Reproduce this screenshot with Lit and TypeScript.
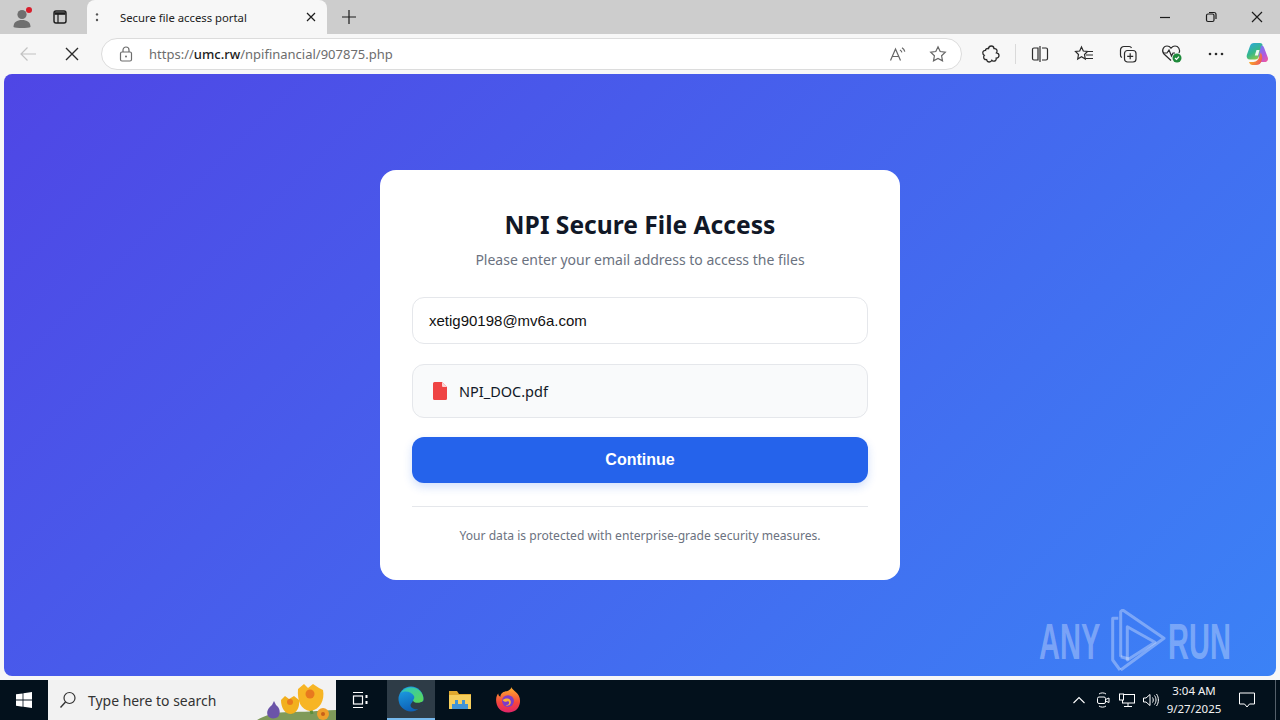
import { LitElement, html, css, svg } from 'lit';
import { customElement } from 'lit/decorators.js';

const icon = (w: number, h: number, body: unknown) => html`<svg width=${w} height=${h} viewBox="0 0 ${w} ${h}" fill="none" stroke="currentColor" stroke-width="1.2">${body}</svg>`;

@customElement('app-root')
export class AppRoot extends LitElement {
  static styles = css`
    :host {
      display: flex;
      flex-direction: column;
      width: 1280px;
      height: 720px;
      overflow: hidden;
      position: relative;
      background: #f7f7f7;
      font-family: 'Noto Sans', 'Open Sans', sans-serif;
    }
    svg { display: block; }
    .strip {
      height: 34px;
      background: #cdcdcd;
      display: flex;
      align-items: center;
      color: #1c1c1c;
      flex: none;
    }
    .strip-btn {
      display: flex;
      align-items: center;
      justify-content: center;
      width: 38px;
      height: 34px;
      flex: none;
    }
    .profile { width: 44px; }
    .tabs-btn { width: 32px; margin-right: 11px; }
    .tab {
      width: 240px;
      height: 34px;
      box-sizing: border-box;
      background: #f7f7f7;
      border-radius: 8px 8px 0 0;
      display: flex;
      align-items: center;
      padding: 0 10px 0 8px;
      font-size: 11.3px;
      flex: none;
    }
    .tab-title { margin-left: 21px; flex: 1; white-space: nowrap; color: #222; }
    .new-tab { width: 44px; }
    .spacer { flex: 1; }
    .win-btn {
      width: 46px;
      height: 34px;
      display: flex;
      align-items: center;
      justify-content: center;
      flex: none;
    }
    .toolbar {
      height: 40px;
      display: flex;
      align-items: center;
      padding-left: 6px;
      flex: none;
      color: #2b2b2b;
    }
    .tool {
      width: 44px;
      height: 40px;
      display: flex;
      align-items: center;
      justify-content: center;
      flex: none;
    }
    .copilot { width: 40px; }
    .back { color: #c2c2c2; }
    .address {
      width: 861px;
      height: 32px;
      box-sizing: border-box;
      margin: 0 7px;
      background: #fff;
      border: 1px solid #dcdcdc;
      border-radius: 16px;
      display: flex;
      align-items: center;
      padding: 0 3px 0 17px;
      font-size: 13px;
      color: #6d6d6d;
      flex: none;
    }
    .url { margin-left: 16px; flex: 1; white-space: nowrap; }
    .url b { font-weight: 500; color: #1b1b1b; }
    .addr-icon { width: 40px; display: flex; justify-content: center; color: #666; }
    .sep { width: 1px; height: 20px; background: #dadada; margin: 0 2px; flex: none; }

    .page {
      flex: 1;
      margin: 0 4px 4px;
      border-radius: 8px;
      background: linear-gradient(135deg, #4f46e5 0%, #3b82f6 100%);
      display: flex;
      align-items: center;
      justify-content: center;
      min-height: 0;
    }
    .card {
      width: 520px;
      height: 410px;
      box-sizing: border-box;
      background: #fff;
      border-radius: 16px;
      padding: 37px 32px 0;
      display: flex;
      flex-direction: column;
    }
    h1 {
      margin: 0;
      font-size: 24.6px;
      line-height: 36px;
      font-weight: 700;
      text-align: center;
      color: #111827;
    }
    .sub {
      margin: 7px 0 0;
      font-size: 14px;
      line-height: 20px;
      text-align: center;
      color: #6b7280;
    }
    .email {
      margin-top: 27px;
      height: 47px;
      box-sizing: border-box;
      border: 1px solid #e5e7eb;
      border-radius: 12px;
      padding: 0 16px;
      display: flex;
      align-items: center;
      font-family: 'Liberation Sans', Arial, sans-serif;
      font-size: 15px;
      color: #111;
    }
    .file {
      margin-top: 20px;
      height: 54px;
      box-sizing: border-box;
      border: 1px solid #e5e7eb;
      border-radius: 12px;
      background: #f9fafb;
      padding: 0 20px;
      display: flex;
      align-items: center;
      gap: 12px;
      font-size: 14.5px;
      color: #111827;
    }
    .continue {
      margin-top: 19px;
      height: 46px;
      border-radius: 12px;
      background: #2563eb;
      color: #fff;
      display: flex;
      align-items: center;
      justify-content: center;
      font-family: 'Liberation Sans', Arial, sans-serif;
      font-size: 16px;
      font-weight: 700;
      box-shadow: 0 4px 10px rgba(37, 99, 235, 0.2);
    }
    .divider { margin-top: 23px; height: 1px; background: #e5e7eb; }
    .note {
      margin-top: 20px;
      text-align: center;
      font-size: 12.1px;
      line-height: 17px;
      color: #6b7280;
    }

    .taskbar {
      height: 40px;
      background: #03111c;
      display: flex;
      align-items: stretch;
      flex: none;
      color: #fff;
    }
    .start {
      width: 48px;
      display: flex;
      align-items: center;
      justify-content: center;
      flex: none;
    }
    .search {
      width: 288px;
      background: #f2f2f2;
      display: flex;
      align-items: center;
      color: #333;
      font-size: 13.95px;
      flex: none;
      padding-left: 11px;
      box-sizing: border-box;
      overflow: hidden;
    }
    .search span { margin-left: 11px; white-space: nowrap; flex: 1; }
    .task {
      width: 48px;
      display: flex;
      align-items: center;
      justify-content: center;
      flex: none;
      box-sizing: border-box;
    }
    .task.view { width: 51px; padding-right: 3px; }
    .task.active { background: #2e3c47; border-bottom: 2px solid #76b9ed; }
    .task.files { margin-left: 1px; }
    .tray {
      width: 24px;
      display: flex;
      align-items: center;
      justify-content: center;
      flex: none;
    }
    .clock {
      width: 62px;
      display: flex;
      flex-direction: column;
      align-items: center;
      justify-content: center;
      font-size: 11.5px;
      line-height: 18px;
      color: #f2f2f2;
      white-space: nowrap;
    }
    .notify {
      width: 42px;
      margin-left: 1px;
      display: flex;
      align-items: center;
      justify-content: center;
    }
    .desk-edge { width: 1px; background: #55606a; margin: 0 4px 0 7px; }

    .watermark {
      position: absolute;
      left: 1039px;
      top: 609px;
      width: 193px;
      height: 62px;
      color: rgba(255, 255, 255, 0.33);
    }
    .wm-text {
      position: absolute;
      top: 4px;
      font-family: 'Liberation Sans', Arial, sans-serif;
      font-size: 50px;
      font-weight: 700;
      line-height: 58px;
      transform: scaleX(0.58);
      transform-origin: left top;
      white-space: nowrap;
    }
    .wm-any { left: 0; }
    .wm-run { left: 129px; }
    .wm-logo { position: absolute; left: 70px; top: 0; }
  `;

  render() {
    return html`
      <div class="strip">
        <div class="strip-btn profile">
          <svg width="24" height="24" viewBox="0 0 24 24" fill="#6f6f6f" stroke="none">
            <circle cx="12" cy="9.5" r="4.6"></circle>
            <path d="M3.5 22c0-5 3.5-7 8.5-7s8.5 2 8.5 7c-2 1.300-15 1.300-17 0z"></path>
            <circle cx="19" cy="5" r="3" fill="#d81e2c"></circle>
          </svg>
        </div>
        <div class="strip-btn tabs-btn">
          ${icon(16, 16, svg`<rect x="2" y="2" width="12" height="12" rx="2" stroke-width="1.4"></rect><path d="M2.5 4.5h11" stroke-width="2.6"></path><path d="M6 5v9"></path>`)}
        </div>
        <div class="tab">
          <svg width="4" height="12" viewBox="0 0 4 12" fill="#555" stroke="none"><circle cx="2" cy="3.4" r="1.2"></circle><circle cx="2" cy="9" r="1.2"></circle></svg>
          <span class="tab-title">Secure file access portal</span>
          ${icon(12, 12, svg`<path d="M2 2l8 8M10 2l-8 8"></path>`)}
        </div>
        <div class="strip-btn new-tab">
          ${icon(16, 16, svg`<path d="M8 1v14M1 8h14"></path>`)}
        </div>
        <div class="spacer"></div>
        <div class="win-btn">${icon(12, 12, svg`<path d="M1 6.5h10"></path>`)}</div>
        <div class="win-btn">${icon(12, 12, svg`<rect x="1.5" y="3" width="7.5" height="7.5" rx="1.5"></rect><path d="M4 1.5h5a2 2 0 0 1 2 2V8"></path>`)}</div>
        <div class="win-btn">${icon(12, 12, svg`<path d="M1 1l10 10M11 1L1 11"></path>`)}</div>
      </div>

      <div class="toolbar">
        <div class="tool back">${icon(18, 18, svg`<path d="M2 9h15M8.5 2.5L2 9l6.5 6.5"></path>`)}</div>
        <div class="tool">${icon(16, 16, svg`<path d="M2 2l12 12M14 2L2 14" stroke-width="1.4"></path>`)}</div>
        <div class="address">
          ${icon(14, 16, svg`<rect x="1.5" y="6" width="11" height="9" rx="1.5"></rect><path d="M4 6V4a3 3 0 0 1 6 0v2"></path><circle cx="7" cy="10.5" r="1" fill="currentColor" stroke="none"></circle>`)}
          <span class="url">https://<b>umc.rw</b>/npifinancial/907875.php</span>
          <span class="addr-icon">${icon(18, 16, svg`<path d="M1.5 14.5L6.5 3l5 11.5M3.4 10.5h6.2"></path><path d="M11 4c1 .6 1.6 1.3 1.9 2.3M13 1.8c1.5 1 2.4 2.2 2.8 3.8"></path>`)}</span>
          <span class="addr-icon">${icon(18, 18, svg`<path d="M9 1.8l2.2 4.7 5.1.7-3.7 3.6.9 5.1L9 13.5l-4.5 2.4.9-5.1L1.7 7.2l5.100-.7z"></path>`)}</span>
        </div>
        <div class="tool">${icon(18, 18, svg`<path d="M6.500 3.600C6.800 1.600 8 1 9.300 1c1.500 0 2.600 1 2.700 2.600 1.800-.3 3.400.8 3 2.900-.1.700-.4 1-.6 1.300 1.800.3 2.600 1.500 2.600 2.700 0 1.500-1 2.500-2.800 2.600.3 2-1 3.400-3 3-.7-.1-1.100-.5-1.300-.8-.5 1-1.300 1.700-2.600 1.700-1.400 0-2.400-1-2.700-2.400-1.900.3-3.200-1-2.900-3 .1-.5.3-.9.600-1.200C1.100 9.800.8 8.600.8 7.700c0-1.500 1.200-2.500 2.700-2.300-.2-1.300 1.300-2.200 3-1.800z" stroke-width="1.300"></path>`)}</div>
        <div class="sep"></div>
        <div class="tool">${icon(18, 18, svg`<path d="M7 3H3a1.500 1.500 0 0 0-1.500 1.500v9A1.500 1.500 0 0 0 3 15h4zM11 3h4a1.500 1.500 0 0 1 1.500 1.500v9A1.500 1.500 0 0 1 15 15h-4M9 1v16"></path>`)}</div>
        <div class="tool">${icon(20, 18, svg`<path d="M7.500 2l1.800 4 4.200.5-3 3 .8 4.500-3.800-2.200L3.700 14l.8-4.500-3-3L5.700 6z"></path><path d="M13 6.500h6M12 10h7M11.500 13.500H19"></path>`)}</div>
        <div class="tool">${icon(18, 18, svg`<rect x="5.500" y="5.500" width="11.500" height="11.500" rx="3"></rect><path d="M11.200 8.300v6M8.200 11.300h6"></path><path d="M3 12.500A2.500 2.500 0 0 1 1.500 10V5A3.500 3.500 0 0 1 5 1.500h5A2.500 2.500 0 0 1 12.500 3"></path>`)}</div>
        <div class="tool">
          <svg width="22" height="20" viewBox="0 0 22 20" fill="none" stroke="#2b2b2b" stroke-width="1.2">
            <path d="M10 16.500L3 10C0 6.500 2.500 2 6 2c2 0 3.200 1 4 2.200C11 3 12 2 14 2c3.500 0 5.500 3.500 4 7"></path>
            <path d="M2 9h4l2-3 2.500 6 1.500-3h2"></path>
            <circle cx="16" cy="14" r="4.500" fill="#1f8a3b" stroke="none"></circle>
            <path d="M14 14l1.500 1.500 2.500-2.800" stroke="#fff"></path>
          </svg>
        </div>
        <div class="tool">
          <svg width="16" height="4" viewBox="0 0 16 4" fill="#2b2b2b" stroke="none"><circle cx="2" cy="2" r="1.300"></circle><circle cx="8" cy="2" r="1.300"></circle><circle cx="14" cy="2" r="1.300"></circle></svg>
        </div>
        <div class="tool copilot">
          <svg width="24" height="24" viewBox="0 0 24 24" stroke="none">
            <defs>
              <linearGradient id="cpa" x1="0" y1="0" x2="0.600" y2="1"><stop offset="0" stop-color="#2aa5e8"></stop><stop offset="0.600" stop-color="#35b88a"></stop><stop offset="1" stop-color="#8cc94a"></stop></linearGradient>
              <linearGradient id="cpb" x1="0.200" y1="0" x2="0.800" y2="1"><stop offset="0" stop-color="#6f7cf2"></stop><stop offset="0.600" stop-color="#b05ae0"></stop><stop offset="1" stop-color="#ef5aa0"></stop></linearGradient>
              <linearGradient id="cpc" x1="0" y1="0" x2="1" y2="0.400"><stop offset="0" stop-color="#f9c52e"></stop><stop offset="0.600" stop-color="#f58a35"></stop><stop offset="1" stop-color="#ee5f5b"></stop></linearGradient>
            </defs>
            <path d="M8 1h6c1.500 0 2.300.8 2.600 2L13 14c-.6 2.400-1.800 3.500-4 3.500H4c-2.600 0-3.800-2-3.200-4.500L4 4C4.600 2 6 1 8 1z" fill="url(#cpa)"></path>
            <path d="M15 3.500c1.800 0 2.700.8 3.200 2.500l3.600 9.500c.8 2.500-.7 4.500-3 4.500H14l-1.500-5.500 2.500-11z" fill="url(#cpb)"></path>
            <path d="M3 20c2 .2 4.500.2 6.500-.5 2.500-1 3.300-3.200 4-5.500l1.300-3.500c1.500 2.500 2 5 1 8C15 21.500 13 23 10 23H6.500C4.800 23 3.600 22 3 20z" fill="url(#cpc)"></path>
            <path d="M10.500 8h3L12 13.500H8.800z" fill="#fff" opacity="0.9"></path>
          </svg>
        </div>
      </div>

      <div class="page">
        <div class="card">
          <h1>NPI Secure File Access</h1>
          <p class="sub">Please enter your email address to access the files</p>
          <div class="email">xetig90198@mv6a.com</div>
          <div class="file">
            <svg width="14" height="18" viewBox="0 0 14 18" stroke="none">
              <path d="M1.500 0H9l5 5v11.500a1.500 1.500 0 0 1-1.500 1.500h-11A1.500 1.500 0 0 1 0 16.500v-15A1.500 1.500 0 0 1 1.500 0z" fill="#ef4444"></path>
              <path d="M9 0l5 5H10a1 1 0 0 1-1-1z" fill="#fbd5d5"></path>
            </svg>
            <span>NPI_DOC.pdf</span>
          </div>
          <div class="continue">Continue</div>
          <div class="divider"></div>
          <div class="note">Your data is protected with enterprise-grade security measures.</div>
        </div>
      </div>

      <div class="taskbar">
        <div class="start">
          <svg width="16" height="16" viewBox="0 0 16 16" fill="#fff" stroke="none"><path d="M0 2.300l6.600-.9v6.200H0zM7.400 1.300L16 0v7.600H7.400zM0 8.400h6.600v6.300L0 13.700zM7.400 8.400H16V16l-8.600-1.200z"></path></svg>
        </div>
        <div class="search">
          ${icon(18, 18, svg`<circle cx="10.500" cy="7" r="5.500"></circle><path d="M6.500 11L1.500 16.500" stroke-width="1.400"></path>`)}
          <span>Type here to search</span>
          <svg width="82" height="40" viewBox="0 0 82 40" stroke="none">
            <path d="M3 40c8-5 20-8 32-8s30-1 47-2v10z" fill="#7f9a5a"></path>
            <path d="M20 21l2 4c4 3 5 8 2 12-3 2-8 2-10-1-2-4 0-8 4-11z" fill="#6b54a8"></path>
            <path d="M37 34l1-6M58 34l-2-8" stroke="#5d8f3a" stroke-width="3"></path>
            <path d="M27 20l4-4 4 3 5-3 5 4c1 7-2 13-8 14-6 0-10-6-10-14z" fill="#f2b01e"></path>
            <path d="M44 9l6-5 4 4 5-4 6 4 4 2c2 10-3 20-13 21-9-1-13-10-12-22z" fill="#f7b524"></path>
            <circle cx="56" cy="14" r="4.500" fill="#e8791e"></circle>
            <circle cx="36" cy="22" r="3" fill="#e8791e"></circle>
            <circle cx="69" cy="34" r="6" fill="#efa02a"></circle>
            <circle cx="69" cy="34" r="2" fill="#c8601a"></circle>
          </svg>
        </div>
        <div class="task view">
          <svg width="16" height="18" viewBox="0 0 16 18" fill="none" stroke="#fff" stroke-width="1.2">
            <path d="M1 1.500h10M1 16.500h10"></path><rect x="1.500" y="5" width="9" height="8"></rect><path d="M14.500 4v3M14.500 10v3" stroke-width="2"></path>
          </svg>
        </div>
        <div class="task active">
          <svg width="26" height="26" viewBox="0 0 26 26" stroke="none">
            <defs>
              <linearGradient id="ega" x1="0" y1="0" x2="0.300" y2="1"><stop offset="0" stop-color="#1fa6e8"></stop><stop offset="1" stop-color="#0e62b8"></stop></linearGradient>
              <linearGradient id="egb" x1="0" y1="0" x2="1" y2="1"><stop offset="0" stop-color="#2bc4c4"></stop><stop offset="1" stop-color="#5fd94f"></stop></linearGradient>
            </defs>
            <circle cx="13" cy="13" r="12.500" fill="url(#ega)"></circle>
            <path d="M3 7C6 1 17-1 23 6c3 4 3 9 1 10-3 2-9 2-9-1 0-2 2-2 1-5-2-4-9-6-13-3z" fill="url(#egb)"></path>
            <path d="M25.500 15c-3 2.500-10 2.500-10.500-.5-.4 2-2 2.500-2.500 4.500 0 3 4 5 8 4 3-1.500 4.500-4.500 5-8z" fill="#2e3c47"></path>
          </svg>
        </div>
        <div class="task files">
          <svg width="24" height="20" viewBox="0 0 24 20" stroke="none">
            <path d="M1 1h8l2 3h12v4H1z" fill="#e0a92e"></path>
            <rect x="1" y="5" width="22" height="14" fill="#f6cf5d"></rect>
            <path d="M7 10h10v4h3v5H4v-5h3z" fill="#3f93d6"></path>
            <rect x="10" y="10" width="4" height="4" fill="#f6cf5d"></rect>
          </svg>
        </div>
        <div class="task">
          <svg width="26" height="26" viewBox="0 0 24 24" stroke="none">
            <defs>
              <linearGradient id="ffa" x1="0.500" y1="0" x2="0.500" y2="1"><stop offset="0" stop-color="#ffb22e"></stop><stop offset="0.600" stop-color="#f5473c"></stop><stop offset="1" stop-color="#e0246a"></stop></linearGradient>
            </defs>
            <path d="M15 0c1 3 5 4 7 8 3 6 0 15-9 15.500C6 24 1 19 1 12c0-3 1-5 2-6 0 2 1 2.500 2 3 0-3 3-5 6-5 2-1 4-2 4-4z" fill="url(#ffa)"></path>
            <circle cx="12" cy="13" r="5.500" fill="#7d3cc8"></circle>
            <path d="M7 12c2-2 6-2 7 0 2 3-1 6-4 5 3 0 4-3 2-4-1 1-4 1-5-1z" fill="#ffb22e"></path>
          </svg>
        </div>
        <div class="spacer"></div>
        <div class="tray">${icon(14, 10, svg`<path d="M1.500 8L7 2.500 12.500 8" stroke-width="1.100"></path>`)}</div>
        <div class="tray">${icon(16, 18, svg`<path d="M4 3c2-1.500 5-1.500 7 0M4 15c2 1.500 5 1.500 7 0" stroke-width="1"></path><rect x="2.500" y="6" width="8" height="6.500" rx="1.500" stroke-width="1"></rect><path d="M10.500 8.500l3.500-1.500v4.500l-3.500-1.500" stroke-width="1"></path>`)}</div>
        <div class="tray">${icon(18, 18, svg`<rect x="4.500" y="3.500" width="12" height="8.500" stroke-width="1"></rect><rect x="1.500" y="3" width="4" height="6" fill="#03111c" stroke-width="1"></rect><path d="M10 12v3M6 15.500h8" stroke-width="1"></path>`)}</div>
        <div class="tray">${icon(18, 16, svg`<path d="M1.500 6v4h2.500L8 13.500v-11L4 6z" stroke-width="1"></path><path d="M10.500 5.500c1 1.500 1 3.500 0 5M12.500 3.500c2 2.500 2 6.500 0 9M14.500 2c2.500 3.500 2.500 8.500 0 12" stroke-width="1"></path>`)}</div>
        <div class="clock"><span>3:04 AM</span><span>9/27/2025</span></div>
        <div class="notify">${icon(18, 16, svg`<path d="M1.500 1h15v11h-5L9 15l-2.500-3h-5z" stroke-width="1"></path>`)}</div>
        <div class="desk-edge"></div>
      </div>

      <div class="watermark">
        <span class="wm-text wm-any">ANY</span>
        <svg class="wm-logo" width="58" height="62" viewBox="0 0 58 62" fill="none" stroke="currentColor" stroke-width="3" stroke-linejoin="round">
          <path d="M9.300 9.300H3.700V51L11 61"></path>
          <path d="M11.700 47.700V2.700L13.700 1 55 29.300 11.700 61"></path>
          <path d="M18.300 17.700L46 33.300 18.300 51z"></path>
          <path d="M11.700 47.700L20 50"></path>
        </svg>
        <span class="wm-text wm-run">RUN</span>
      </div>
    `;
  }
}
